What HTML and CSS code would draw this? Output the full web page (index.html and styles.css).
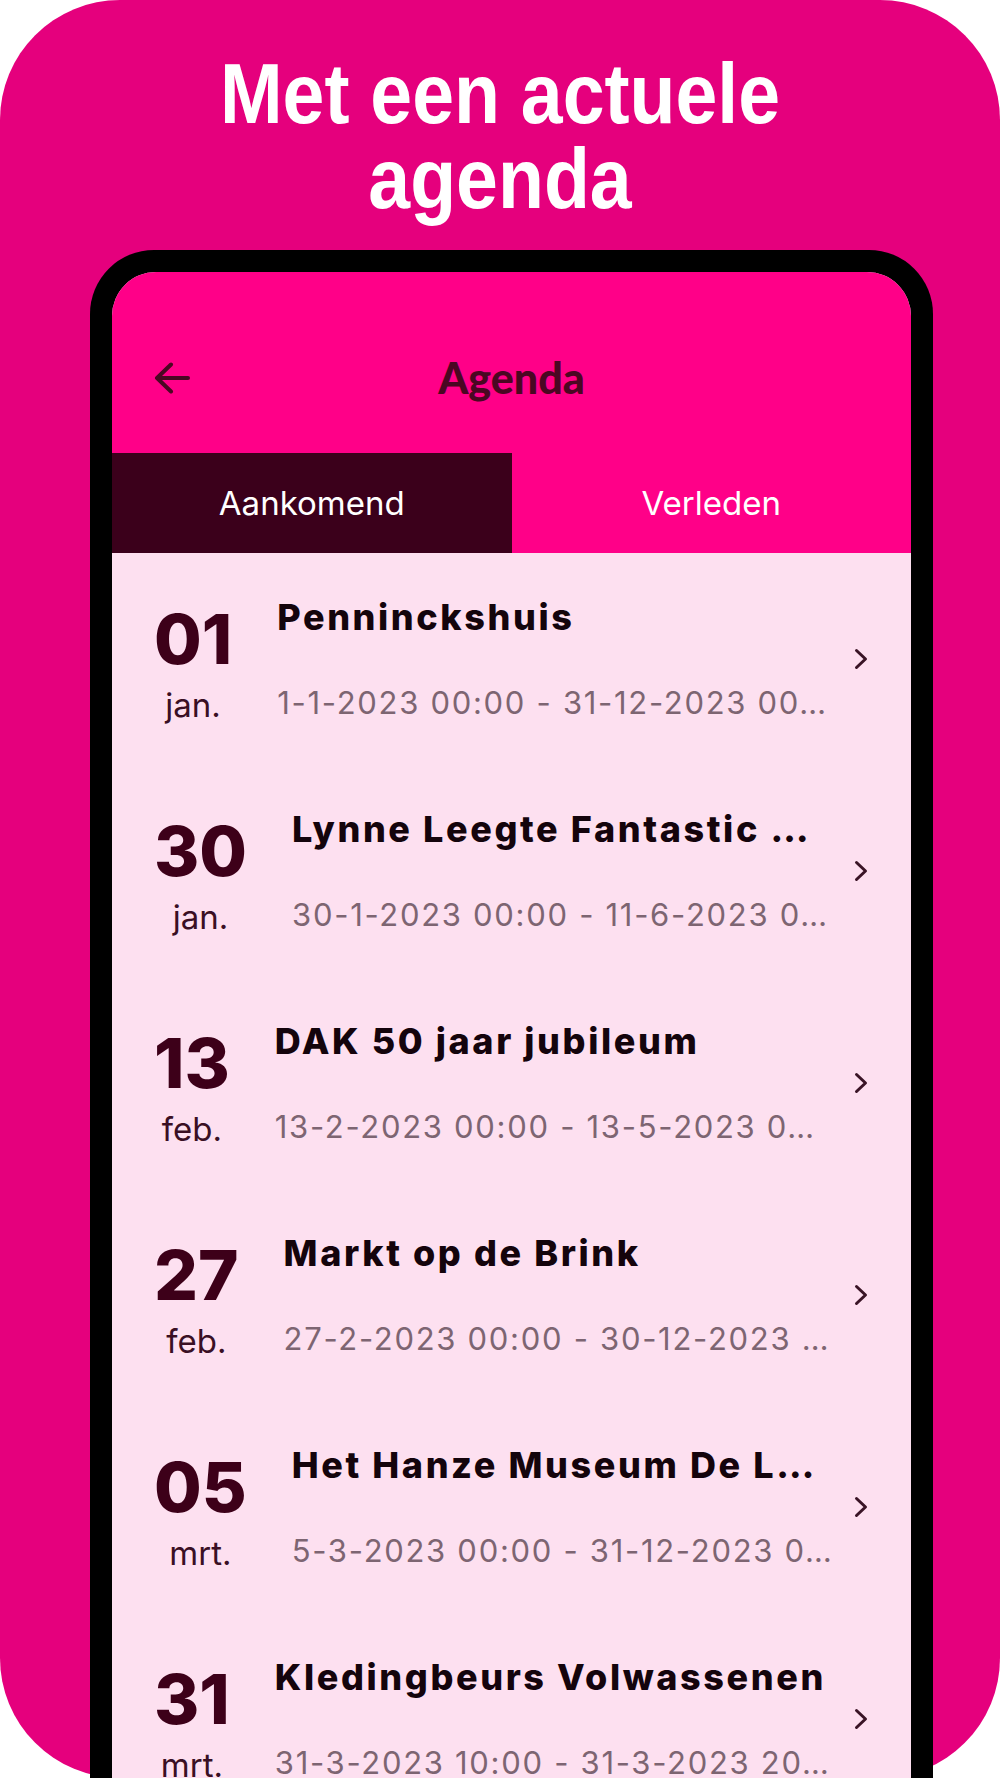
FILE: index.html
```html
<!DOCTYPE html>
<html lang="nl">
<head>
<meta charset="utf-8">
<title>Agenda</title>
<link rel="stylesheet" href="styles.css">
</head>
<body>
<div class="stage">
  <h1 class="headline">Met een actuele<br>agenda</h1>
  <div class="phone">
    <div class="screen">
      <header class="appbar">
        <div class="back">
          <svg width="36" height="32" viewBox="0 0 36 32" aria-hidden="true"><path d="M17 2.5 L3 16 L17 29.5 M3 16 H34" fill="none" stroke="#4a0722" stroke-width="4" stroke-linecap="round" stroke-linejoin="round"/></svg>
        </div>
        <div class="apptitle">Agenda</div>
        <div></div>
      </header>
      <nav class="tabs">
        <div class="tab active">Aankomend</div>
        <div class="tab">Verleden</div>
      </nav>
      <ul class="list">
        <li class="row">
          <div class="datecol"><span class="day">01</span><span class="month">jan.</span></div>
          <div class="info"><span class="title">Penninckshuis</span><span class="when">1-1-2023 00:00 - 31-12-2023 00…</span></div>
          <svg class="chev" width="14" height="22" viewBox="0 0 14 22" aria-hidden="true"><path d="M2.5 2.5 L11.5 11 L2.5 19.5" fill="none" stroke="#3a1426" stroke-width="3" stroke-linecap="round" stroke-linejoin="round"/></svg>
        </li>
        <li class="row">
          <div class="datecol"><span class="day">30</span><span class="month">jan.</span></div>
          <div class="info"><span class="title">Lynne Leegte Fantastic …</span><span class="when">30-1-2023 00:00 - 11-6-2023 0…</span></div>
          <svg class="chev" width="14" height="22" viewBox="0 0 14 22" aria-hidden="true"><path d="M2.5 2.5 L11.5 11 L2.5 19.5" fill="none" stroke="#3a1426" stroke-width="3" stroke-linecap="round" stroke-linejoin="round"/></svg>
        </li>
        <li class="row">
          <div class="datecol"><span class="day">13</span><span class="month">feb.</span></div>
          <div class="info"><span class="title">DAK 50 jaar jubileum</span><span class="when">13-2-2023 00:00 - 13-5-2023 0…</span></div>
          <svg class="chev" width="14" height="22" viewBox="0 0 14 22" aria-hidden="true"><path d="M2.5 2.5 L11.5 11 L2.5 19.5" fill="none" stroke="#3a1426" stroke-width="3" stroke-linecap="round" stroke-linejoin="round"/></svg>
        </li>
        <li class="row">
          <div class="datecol"><span class="day">27</span><span class="month">feb.</span></div>
          <div class="info"><span class="title">Markt op de Brink</span><span class="when">27-2-2023 00:00 - 30-12-2023 …</span></div>
          <svg class="chev" width="14" height="22" viewBox="0 0 14 22" aria-hidden="true"><path d="M2.5 2.5 L11.5 11 L2.5 19.5" fill="none" stroke="#3a1426" stroke-width="3" stroke-linecap="round" stroke-linejoin="round"/></svg>
        </li>
        <li class="row">
          <div class="datecol"><span class="day">05</span><span class="month">mrt.</span></div>
          <div class="info"><span class="title">Het Hanze Museum De L…</span><span class="when">5-3-2023 00:00 - 31-12-2023 0…</span></div>
          <svg class="chev" width="14" height="22" viewBox="0 0 14 22" aria-hidden="true"><path d="M2.5 2.5 L11.5 11 L2.5 19.5" fill="none" stroke="#3a1426" stroke-width="3" stroke-linecap="round" stroke-linejoin="round"/></svg>
        </li>
        <li class="row">
          <div class="datecol"><span class="day">31</span><span class="month">mrt.</span></div>
          <div class="info"><span class="title">Kledingbeurs Volwassenen</span><span class="when">31-3-2023 10:00 - 31-3-2023 20…</span></div>
          <svg class="chev" width="14" height="22" viewBox="0 0 14 22" aria-hidden="true"><path d="M2.5 2.5 L11.5 11 L2.5 19.5" fill="none" stroke="#3a1426" stroke-width="3" stroke-linecap="round" stroke-linejoin="round"/></svg>
        </li>
      </ul>
    </div>
  </div>
</div>
</body>
</html>
```
FILE: styles.css
```css
html, body {
  margin: 0;
  padding: 0;
  height: 1778px;
  overflow: hidden;
  background: #ffffff;
}

.stage {
  height: 1778px;
  box-sizing: border-box;
  background: #e5007d;
  border-radius: 120px;
  padding-top: 51px;
  display: flex;
  flex-direction: column;
  align-items: flex-start;
}

.headline {
  align-self: stretch;
  margin: 0;
  font-family: "Liberation Sans", Arial, sans-serif;
  font-weight: 700;
  font-size: 85px;
  line-height: 85px;
  color: #ffffff;
  text-align: center;
  transform: scaleX(0.885);
}

.phone {
  margin-top: 29px;
  margin-left: 90px;
  width: 843px;
  height: 1600px;
  flex: none;
  box-sizing: border-box;
  background: #000000;
  border-radius: 64px 64px 0 0;
  padding: 22px 22px 0;
}

.screen {
  height: 100%;
  background: #fde0f0;
  border-radius: 44px 44px 0 0;
  overflow: hidden;
}

.appbar {
  height: 181px;
  box-sizing: border-box;
  padding-top: 30px;
  background: #ff0088;
  display: grid;
  grid-template-columns: 1fr auto 1fr;
  align-items: center;
}

.back {
  padding-left: 42px;
  display: flex;
  align-items: center;
}

.apptitle {
  font-family: Lato, "Open Sans", sans-serif;
  font-weight: 900;
  font-size: 43px;
  line-height: 50px;
  color: #4a0722;
}

.tabs {
  display: grid;
  grid-template-columns: 1fr 1fr;
  height: 100px;
  background: #ff0088;
}

.tab {
  display: flex;
  align-items: center;
  justify-content: center;
  font-family: Inter, "Noto Sans", sans-serif;
  font-weight: 400;
  font-size: 33px;
  color: #ffffff;
}

.tab.active {
  background: #3b001b;
}

.list {
  list-style: none;
  margin: 0;
  padding: 0;
}

.row {
  height: 212px;
  box-sizing: border-box;
  padding: 0 43px 0 42px;
  display: flex;
  align-items: center;
  gap: 45px;
}

.datecol {
  display: flex;
  flex-direction: column;
  align-items: center;
  padding-top: 10px;
  gap: 10px;
}

.day {
  font-family: Inter, "Noto Sans", sans-serif;
  font-weight: 800;
  font-size: 69px;
  line-height: 72px;
  color: #3d0019;
}

.month {
  font-family: Inter, "Noto Sans", sans-serif;
  font-weight: 400;
  font-size: 33px;
  line-height: 40px;
  color: #3a0f24;
}

.info {
  flex: 1;
  min-width: 0;
  display: flex;
  flex-direction: column;
  gap: 44px;
}

.title {
  font-family: Inter, "Noto Sans", sans-serif;
  font-weight: 800;
  font-size: 36px;
  line-height: 44px;
  letter-spacing: 2.6px;
  color: #14040c;
  white-space: nowrap;
}

.when {
  font-family: Inter, "Noto Sans", sans-serif;
  font-weight: 400;
  font-size: 31px;
  line-height: 40px;
  letter-spacing: 1.7px;
  color: #7d6572;
  white-space: nowrap;
}

.chev {
  flex: none;
  margin-left: 12px;
}
```
